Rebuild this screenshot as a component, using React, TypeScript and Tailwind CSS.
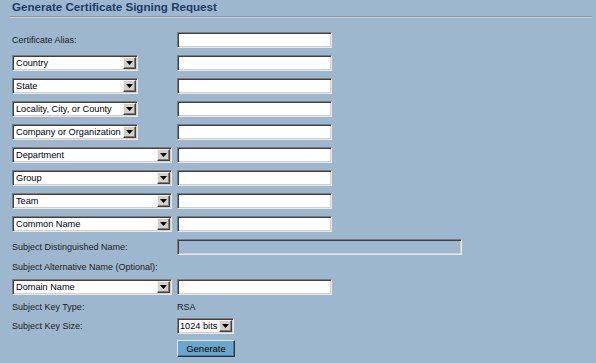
import React from "react";

const font = { fontFamily: '"Liberation Sans", Arial, sans-serif' };

function TextBox({ wide = false, disabled = false }: { wide?: boolean; disabled?: boolean }) {
  return (
    <div
      className={`h-[16px] ${wide ? "w-[285px]" : "w-[155px]"} ${
        disabled ? "bg-[#9db8ce]" : "bg-white"
      } border border-t-[#7c7c7c] border-l-[#7c7c7c] border-b-[#e8e8e8] border-r-[#e8e8e8] shadow-[inset_1px_1px_0_#404040,inset_-1px_-1px_0_#d4d0c8]`}
    />
  );
}

function Arrow() {
  return (
    <div className="flex h-[12px] w-[13px] shrink-0 items-center justify-center bg-[#d4d0c8] border border-t-[#f4f4f4] border-l-[#f4f4f4] border-b-[#404040] border-r-[#404040] shadow-[inset_-1px_-1px_0_#808080]">
      <svg width="7" height="4" viewBox="0 0 7 4">
        <polygon points="0,0 7,0 3.5,4" fill="#000" />
      </svg>
    </div>
  );
}

function Select({ label, w, pl = "pl-[3px]" }: { label: string; w: string; pl?: string }) {
  return (
    <div
      className={`flex h-[16px] ${w} items-center bg-white border border-t-[#7c7c7c] border-l-[#7c7c7c] border-b-[#e8e8e8] border-r-[#e8e8e8] shadow-[inset_1px_1px_0_#404040,inset_-1px_-1px_0_#d4d0c8]`}
    >
      <span className={`flex-1 overflow-hidden whitespace-nowrap ${pl} text-[9.2px] leading-[12px] text-black`}>
        {label}
      </span>
      <div className="mr-[1px]">
        <Arrow />
      </div>
    </div>
  );
}

function Label({ children }: { children: React.ReactNode }) {
  return <span className="text-[9px] leading-[12px] text-[#1b1b1b]">{children}</span>;
}

function Row({ left, right, className = "" }: { left?: React.ReactNode; right?: React.ReactNode; className?: string }) {
  return (
    <div className={`flex h-[16px] items-center ${className}`}>
      <div className="flex w-[165px] items-center">{left}</div>
      <div className="flex items-center">{right}</div>
    </div>
  );
}

export default function App() {
  const short = "w-[126px]";
  const long = "w-[160px]";
  return (
    <div className="h-[363px] w-[596px] overflow-hidden bg-[#9db8ce]" style={font}>
      <div className="h-[16px] pl-[12px]">
        <span className="block text-[11.6px] font-bold leading-[14px] text-[#1d3a68]">
          Generate Certificate Signing Request
        </span>
      </div>
      <div className="ml-[10px] mr-[4px] border-t border-b border-t-[#8a97a3] border-b-[#c6d3dd]" />
      <div className="flex flex-col pl-[12px] pt-[14px]">
        <Row left={<Label>Certificate Alias:</Label>} right={<TextBox />} />
        <Row className="mt-[7px]" left={<Select label="Country" w={short} />} right={<TextBox />} />
        <Row className="mt-[7px]" left={<Select label="State" w={short} />} right={<TextBox />} />
        <Row className="mt-[7px]" left={<Select label="Locality, City, or County" w={short} />} right={<TextBox />} />
        <Row className="mt-[7px]" left={<Select label="Company or Organization" w={short} />} right={<TextBox />} />
        <Row className="mt-[7px]" left={<Select label="Department" w={long} />} right={<TextBox />} />
        <Row className="mt-[7px]" left={<Select label="Group" w={long} />} right={<TextBox />} />
        <Row className="mt-[7px]" left={<Select label="Team" w={long} />} right={<TextBox />} />
        <Row className="mt-[7px]" left={<Select label="Common Name" w={long} />} right={<TextBox />} />
        <Row className="mt-[7px]" left={<Label>Subject Distinguished Name:</Label>} right={<TextBox wide disabled />} />
        <div className="mt-[4px] flex h-[16px] items-center">
          <Label>Subject Alternative Name (Optional):</Label>
        </div>
        <Row className="mt-[4px]" left={<Select label="Domain Name" w={long} />} right={<TextBox />} />
        <Row className="mt-[4px]" left={<Label>Subject Key Type:</Label>} right={<Label>RSA</Label>} />
        <Row className="mt-[3px]" left={<Label>Subject Key Size:</Label>} right={<Select label="1024 bits" w="w-[57px]" pl="pl-[2px]" />} />
        <div className="mt-[6px] flex">
          <div className="w-[165px]" />
          <button className="flex h-[17px] w-[58px] items-center justify-center bg-[#6aa7ca] border border-t-[#d8e8f0] border-l-[#d8e8f0] border-b-[#243442] border-r-[#243442] shadow-[inset_-1px_-1px_0_#4d7a94] text-[9.5px] leading-[12px] text-black">
            Generate
          </button>
        </div>
      </div>
    </div>
  );
}
